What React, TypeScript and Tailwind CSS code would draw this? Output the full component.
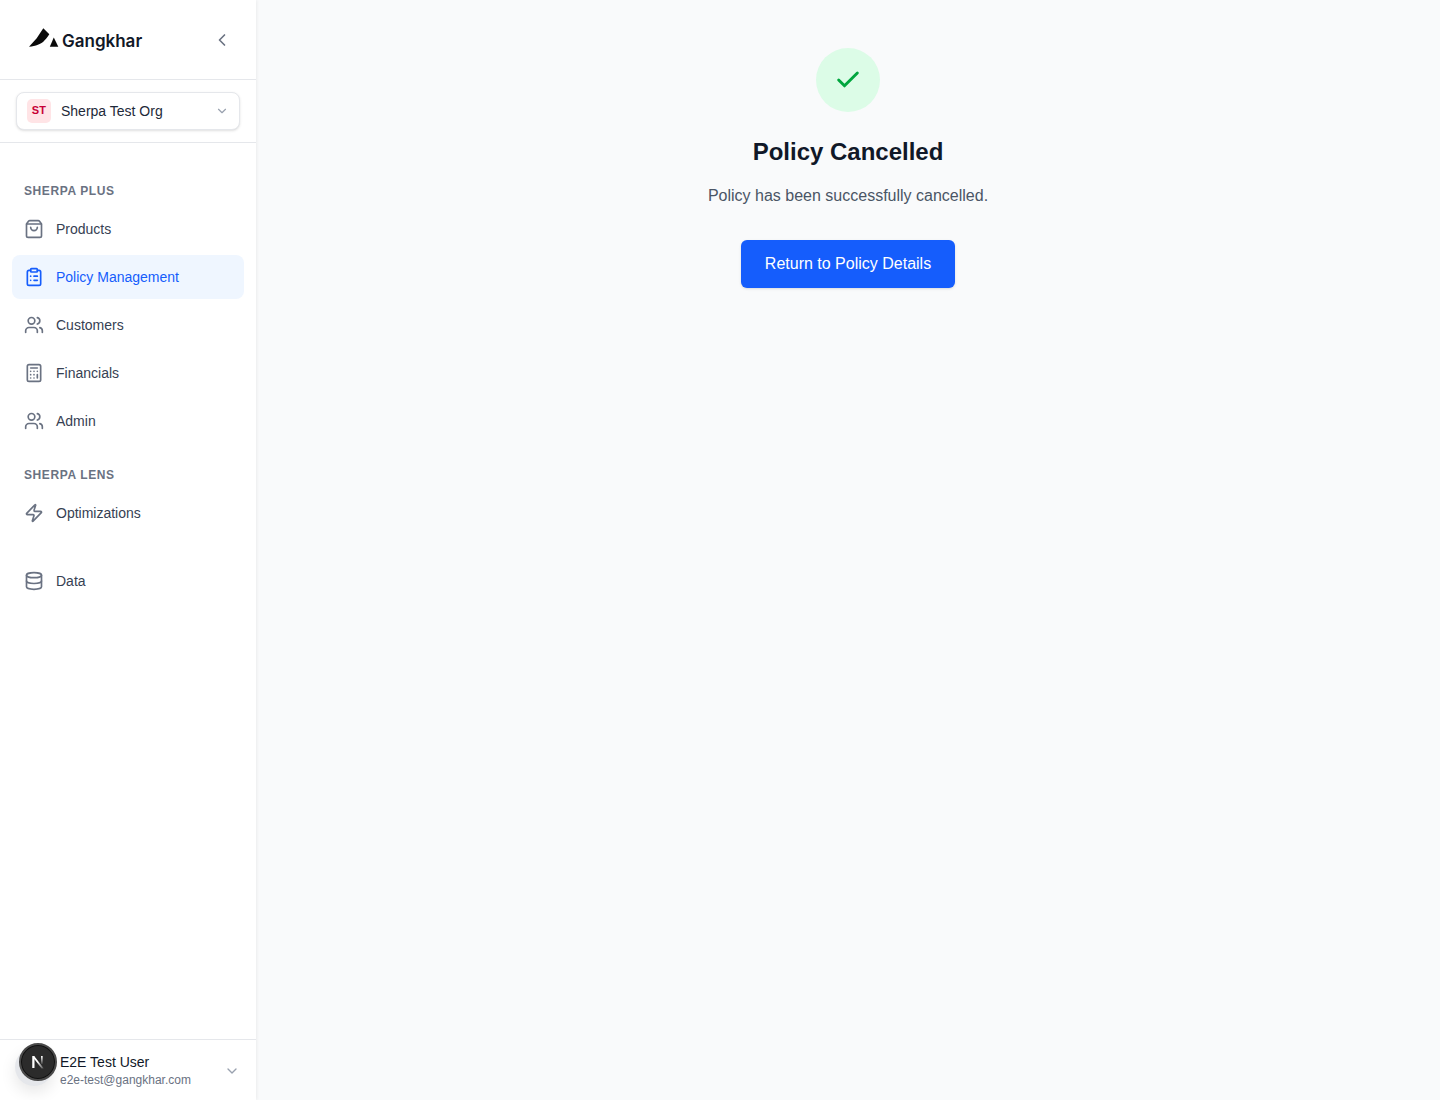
import { Calculator, Check, ChevronDown, ChevronLeft, ClipboardList, Database, ShoppingBag, Users, Zap, type LucideIcon } from "lucide-react";

function NavItem({ icon: Icon, label, active }: { icon: LucideIcon; label: string; active?: boolean }) {
  return (
    <a className={`flex h-11 items-center gap-3 rounded-lg px-3 text-sm ${active ? "bg-[#eff6ff] text-[#155dfc]" : "text-[#364153]"}`}>
      <Icon className={`size-5 shrink-0 ${active ? "text-[#155dfc]" : "text-[#6a7282]"}`} strokeWidth={2} />
      <span>{label}</span>
    </a>
  );
}

function SectionLabel({ children }: { children: string }) {
  return <div className="px-3 text-xs font-bold uppercase leading-4 tracking-wider text-[#6a7282]">{children}</div>;
}

export default function App() {
  return (
    <div className="flex h-[1100px] bg-[#f9fafb] font-['Liberation_Sans',Arial,sans-serif]">
      <aside className="relative flex w-64 shrink-0 flex-col bg-white shadow-[1px_0_3px_rgba(0,0,0,0.06)]">
        <div className="flex h-20 shrink-0 items-center justify-between border-b border-[#e5e7eb] pl-7 pr-6">
          <div className="flex items-center gap-[3px]">
            <svg width="31" height="21" viewBox="0 0 31 21" className="mt-[-5px]">
              <path d="M1 19.7L8.7 11.3L15.3 1.3L21.3 7.3C19 11 17 13 15.3 14.7C13 16.8 8 19 1 19.7Z" fill="#0a0a0a" />
              <path d="M25.8 10.5L30.3 19.7H21.8Z" fill="#0a0a0a" />
            </svg>
            <span className="mt-[2px] font-['Inter',sans-serif] text-[17px] font-semibold leading-6 text-[#111827]">Gangkhar</span>
          </div>
          <ChevronLeft className="size-5 text-[#6a7282]" strokeWidth={2} />
        </div>

        <div className="h-[63px] shrink-0 border-b border-[#e5e7eb] px-4 pt-3">
          <button className="flex h-[38px] w-full items-center rounded-lg border border-[#e5e7eb] bg-white pl-2.5 pr-[10px] shadow-sm">
            <span className="flex size-6 items-center justify-center rounded-[5px] bg-[#ffe4e6] pb-[2px] text-[11px] font-bold leading-4 tracking-[0.2px] text-[#c70036]">ST</span>
            <span className="ml-2.5 flex-1 text-left text-sm text-[#1e2939]">Sherpa Test Org</span>
            <ChevronDown className="size-3.5 text-[#99a1af]" strokeWidth={2} />
          </button>
        </div>

        <nav className="flex flex-col px-3 pt-10">
          <SectionLabel>Sherpa Plus</SectionLabel>
          <div className="mt-2 flex flex-col gap-1">
            <NavItem icon={ShoppingBag} label="Products" />
            <NavItem icon={ClipboardList} label="Policy Management" active />
            <NavItem icon={Users} label="Customers" />
            <NavItem icon={Calculator} label="Financials" />
            <NavItem icon={Users} label="Admin" />
          </div>
          <div className="mt-6">
            <SectionLabel>Sherpa Lens</SectionLabel>
          </div>
          <div className="mt-2">
            <NavItem icon={Zap} label="Optimizations" />
          </div>
          <div className="mt-6">
            <NavItem icon={Database} label="Data" />
          </div>
        </nav>

        <div className="relative mt-auto flex h-[61px] shrink-0 items-start border-t border-[#e5e7eb] pl-[60px] pr-4 pt-3">
          <div className="min-w-0 flex-1">
            <div className="text-sm leading-5 text-[#111827]">E2E Test User</div>
            <div className="text-xs leading-4 text-[#6a7282]">e2e-test@gangkhar.com</div>
          </div>
          <ChevronDown className="mt-[11px] size-4 text-[#99a1af]" strokeWidth={2} />
          <div className="absolute left-[15px] top-[8px] size-[38px] rounded-full bg-[#e5e7eb] shadow-[0_6px_16px_rgba(0,0,0,0.1)]" />
          <div className="absolute left-[19px] top-[3px] flex size-[38px] items-center justify-center rounded-full border-2 border-[#4a4a4a] bg-[#2b2b2b] shadow-[inset_0_0_0_1px_#111]">
            <svg width="14" height="14" viewBox="0 0 14 14" fill="none">
              <defs>
                <linearGradient id="nfade" x1="0" y1="0" x2="1" y2="1">
                  <stop offset="0.45" stopColor="#fff" />
                  <stop offset="1" stopColor="#fff" stopOpacity="0.15" />
                </linearGradient>
                <linearGradient id="nstem" x1="0" y1="0" x2="0" y2="1">
                  <stop offset="0" stopColor="#fff" />
                  <stop offset="1" stopColor="#fff" stopOpacity="0.1" />
                </linearGradient>
              </defs>
              <path d="M1.5 13V1H3.2L12.8 13.5H10.6L3.3 4V13Z" fill="url(#nfade)" />
              <rect x="10" y="1" width="1.7" height="8" fill="url(#nstem)" />
              <path d="M1.5 13V1H3.3V13Z" fill="#fff" />
            </svg>
          </div>
        </div>
      </aside>

      <main className="flex flex-1 flex-col items-center pt-12">
        <div className="flex size-16 items-center justify-center rounded-full bg-[#dcfce7]">
          <Check className="size-7 text-[#00a63e]" strokeWidth={2.5} />
        </div>
        <h1 className="mt-6 text-2xl font-bold leading-8 text-[#101828]">Policy Cancelled</h1>
        <p className="mt-4 text-base leading-6 text-[#4a5565]">Policy has been successfully cancelled.</p>
        <button className="mt-8 h-12 rounded-md bg-[#155dfc] px-6 text-base text-white shadow-sm">Return to Policy Details</button>
      </main>
    </div>
  );
}
